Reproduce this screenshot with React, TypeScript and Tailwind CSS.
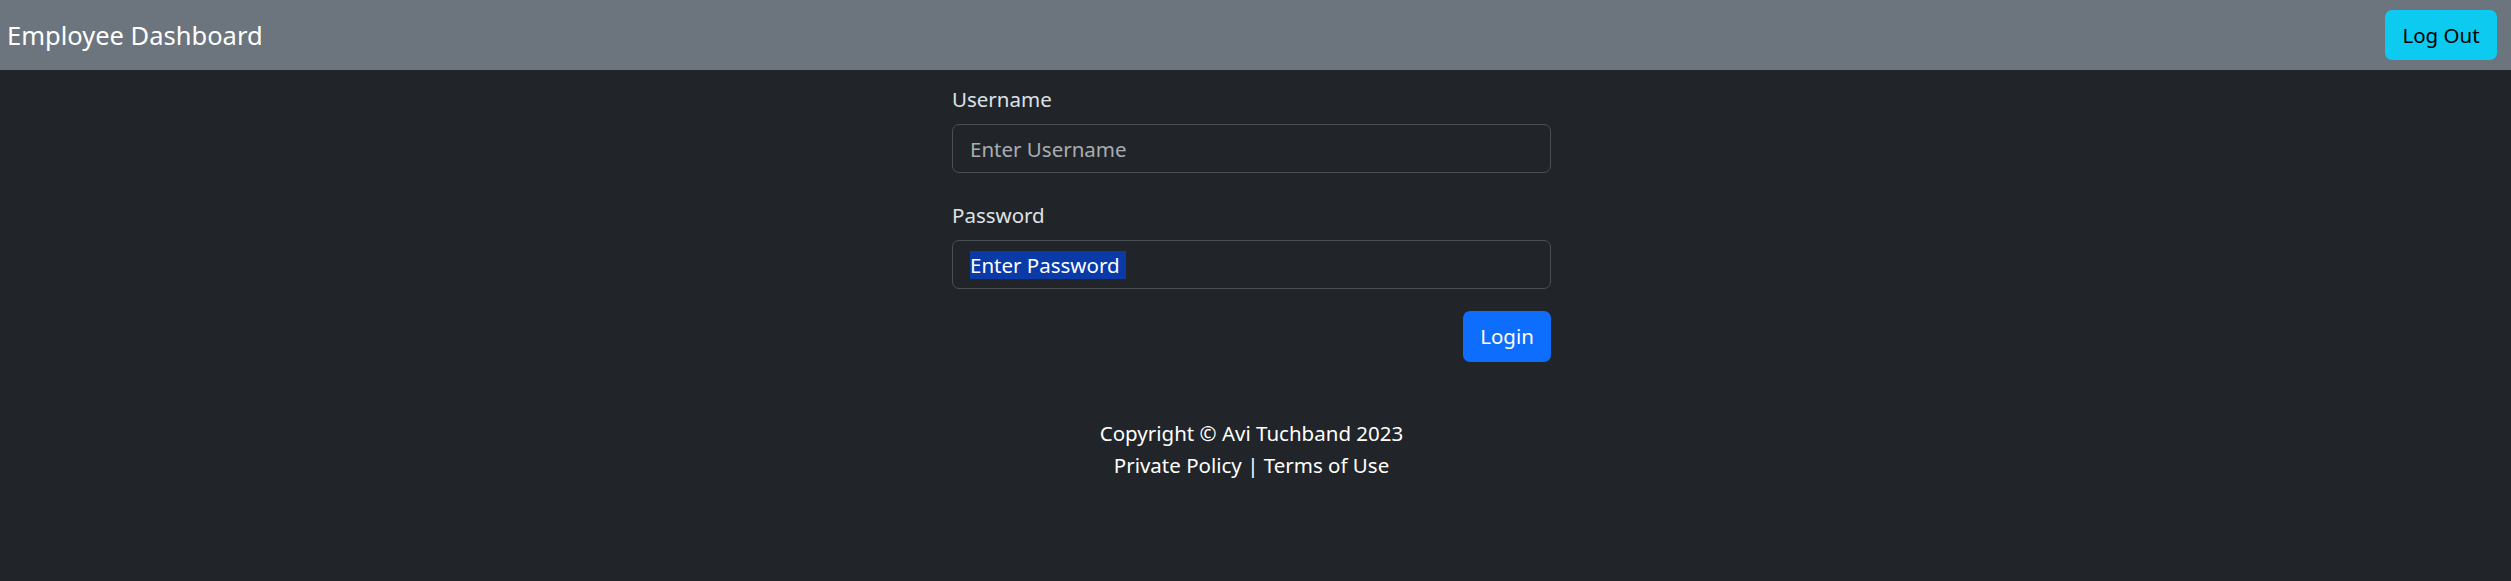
export default function App() {
  return (
    <div className="min-h-[581px] bg-[#212529] font-['Noto_Sans',sans-serif] text-[20.5px] text-[#dee2e6]">
      {/* Navbar */}
      <nav className="flex h-[70px] items-center justify-between bg-[#6c757d] pl-[7px] pr-[14px]">
        <span className="text-[25.5px] leading-[37px] text-white">Employee Dashboard</span>
        <button
          type="button"
          className="h-[50px] w-[112px] rounded-[7px] bg-[#0dcaf0] text-[20.5px] leading-[30px] text-black"
        >
          Log Out
        </button>
      </nav>

      {/* Login form */}
      <main className="flex flex-col items-center pr-[8px]">
        <form className="w-[599px] pt-[14px]" onSubmit={(e) => e.preventDefault()}>
          <label htmlFor="username" className="mb-[10px] block leading-[30px]">
            Username
          </label>
          <input
            id="username"
            type="text"
            placeholder="Enter Username"
            className="block h-[49px] w-full rounded-[7px] border border-[#495057] bg-[#212529] px-[17px] text-[20.5px] text-[#dee2e6] outline-none placeholder:text-[#a9adb2]"
          />

          <label htmlFor="password" className="mb-[10px] mt-[27px] block leading-[30px]">
            Password
          </label>
          <div
            id="password"
            className="flex h-[49px] w-full items-center rounded-[7px] border border-[#495057] bg-[#212529] px-[17px]"
          >
            <span className="bg-[#0a3aa8] pr-[6px] leading-[28px] text-white">Enter Password</span>
          </div>

          <div className="mt-[22px] flex justify-end">
            <button
              type="submit"
              className="h-[51px] w-[88px] rounded-[7px] bg-[#0d6efd] text-[20.5px] text-white"
            >
              Login
            </button>
          </div>
        </form>

        {/* Footer */}
        <footer className="mt-[55px] text-center leading-[32px] text-white">
          <p>Copyright © Avi Tuchband 2023</p>
          <p>Private Policy | Terms of Use</p>
        </footer>
      </main>
    </div>
  );
}
